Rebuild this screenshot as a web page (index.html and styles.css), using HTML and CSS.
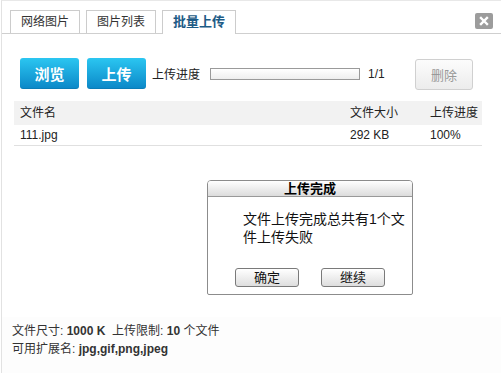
FILE: index.html
```html
<!DOCTYPE html>
<html lang="zh-CN">
<head>
<meta charset="utf-8">
<title>批量上传</title>
<link rel="stylesheet" href="styles.css">
</head>
<body>
<div class="win">
  <div class="tabbar">
    <div class="tab">网络图片</div>
    <div class="tab">图片列表</div>
    <div class="tab active">批量上传</div>
    <div class="close">
      <svg width="18" height="16" viewBox="0 0 18 16"><path d="M6 5 L12 11 M12 5 L6 11" stroke="#fff" stroke-width="2.4" stroke-linecap="square"/></svg>
    </div>
  </div>
  <div class="toolbar">
    <button class="btn-blue">浏览</button>
    <button class="btn-blue">上传</button>
    <span class="label">上传进度</span>
    <div class="progress"></div>
    <span class="count">1/1</span>
    <button class="btn-del">删除</button>
  </div>
  <div class="files">
    <div class="row head"><span class="name">文件名</span><span>文件大小</span><span>上传进度</span></div>
    <div class="row"><span class="name">111.jpg</span><span>292 KB</span><span>100%</span></div>
  </div>
  <div class="stage"></div>
  <div class="footer">
    <div>文件尺寸: <b>1000 K</b>&nbsp; 上传限制: <b>10</b> 个文件</div>
    <div>可用扩展名: <b>jpg,gif,png,jpeg</b></div>
  </div>
</div>
<div class="modal">
  <div class="modal-title">上传完成</div>
  <p class="modal-msg">文件上传完成总共有1个文件上传失败</p>
  <div class="modal-actions">
    <button class="btn-gray">确定</button>
    <button class="btn-gray">继续</button>
  </div>
</div>
</body>
</html>
```

FILE: styles.css
```css
* { box-sizing: border-box; }
html, body {
  margin: 0;
  padding: 0;
  background: #fff;
}
body {
  position: relative;
  width: 501px;
  height: 373px;
  overflow: hidden;
  font-family: "Liberation Sans", "Noto Sans CJK SC", sans-serif;
  font-size: 12px;
  color: #333;
}
button {
  font-family: "Liberation Sans", "Noto Sans CJK SC", sans-serif;
  padding: 0;
  cursor: pointer;
}
.win {
  margin-left: 1px;
  height: 373px;
  border-left: 1px solid #e2e2e2;
  border-top: 1px solid #e8e8e8;
  display: flex;
  flex-direction: column;
}
.tabbar {
  height: 33px;
  border-bottom: 1px solid #cfcfcf;
  display: flex;
  align-items: flex-end;
  padding-left: 8px;
}
.tab {
  height: 23px;
  line-height: 22px;
  padding: 0 10px;
  margin-right: 6px;
  border: 1px solid #cccccc;
  border-bottom: none;
  background: #fff;
  color: #333;
  font-size: 12px;
}
.tab.active {
  height: 24px;
  margin-bottom: -1px;
  padding: 0 10px;
  font-weight: bold;
  font-size: 13px;
  color: #1d5b86;
}
.close {
  margin-left: auto;
  margin-right: 8px;
  align-self: flex-start;
  margin-top: 12px;
  width: 18px;
  height: 16px;
  border-radius: 2px;
  background: #9c9c9c;
  display: flex;
}
.toolbar {
  display: flex;
  align-items: center;
  padding: 23px 28px 0 18px;
}
.btn-blue {
  width: 59px;
  height: 31px;
  margin-right: 8px;
  border: none;
  border-radius: 3px;
  background: linear-gradient(#2bc6f1, #0b87c7);
  color: #fff;
  font-size: 15px;
  font-weight: bold;
  box-shadow: inset 0 -1px 0 rgba(0,0,0,0.08);
}
.label {
  margin-left: -2px;
  color: #222;
}
.progress {
  width: 150px;
  height: 12px;
  margin-left: 10px;
  border: 1px solid #9a9a9a;
  background: linear-gradient(#fff, #eeeeee);
}
.count {
  margin-left: 8px;
  color: #222;
}
.btn-del {
  margin-left: auto;
  align-self: flex-start;
  margin-top: 2px;
  width: 58px;
  height: 31px;
  border: 1px solid #d0d0d0;
  border-radius: 3px;
  background: linear-gradient(#fcfcfc, #ececec);
  color: #999;
  font-size: 13px;
}
.files {
  margin: 11px 0 0 12px;
  width: 468px;
}
.row {
  display: grid;
  grid-template-columns: 336px 80px 52px;
  height: 21px;
  line-height: 21px;
  border-bottom: 1px solid #e0e0e0;
  color: #222;
}
.row.head {
  height: 24px;
  line-height: 24px;
  background: #f2f2f2;
  border-bottom: none;
}
.row .name {
  padding-left: 6px;
}
.stage {
  flex: 1;
}
.footer {
  height: 56px;
  padding: 5px 0 0 10px;
  line-height: 18px;
  background: #fdfdfd;
  color: #333;
}
.footer b {
  color: #333;
}
.modal {
  position: absolute;
  left: 207px;
  top: 180px;
  width: 206px;
  height: 115px;
  border: 1px solid #8c8c8c;
  border-radius: 4px 4px 2px 2px;
  background: #fff;
  display: flex;
  flex-direction: column;
}
.modal-title {
  height: 16px;
  line-height: 15px;
  border-bottom: 1px solid #999;
  border-radius: 3px 3px 0 0;
  background: linear-gradient(#ffffff, #dcdcdc);
  text-align: center;
  font-weight: bold;
  font-size: 13px;
  color: #000;
}
.modal-msg {
  margin: 13px 0 0 35px;
  width: 164px;
  font-size: 14px;
  line-height: 18px;
  color: #111;
}
.modal-actions {
  margin-top: auto;
  padding-bottom: 7px;
  display: flex;
  justify-content: center;
  gap: 22px;
}
.btn-gray {
  width: 64px;
  height: 19px;
  border: 1px solid #7a7a7a;
  border-radius: 3px;
  background: linear-gradient(#ffffff, #dedede);
  color: #111;
  font-size: 13px;
  line-height: 17px;
}
```
